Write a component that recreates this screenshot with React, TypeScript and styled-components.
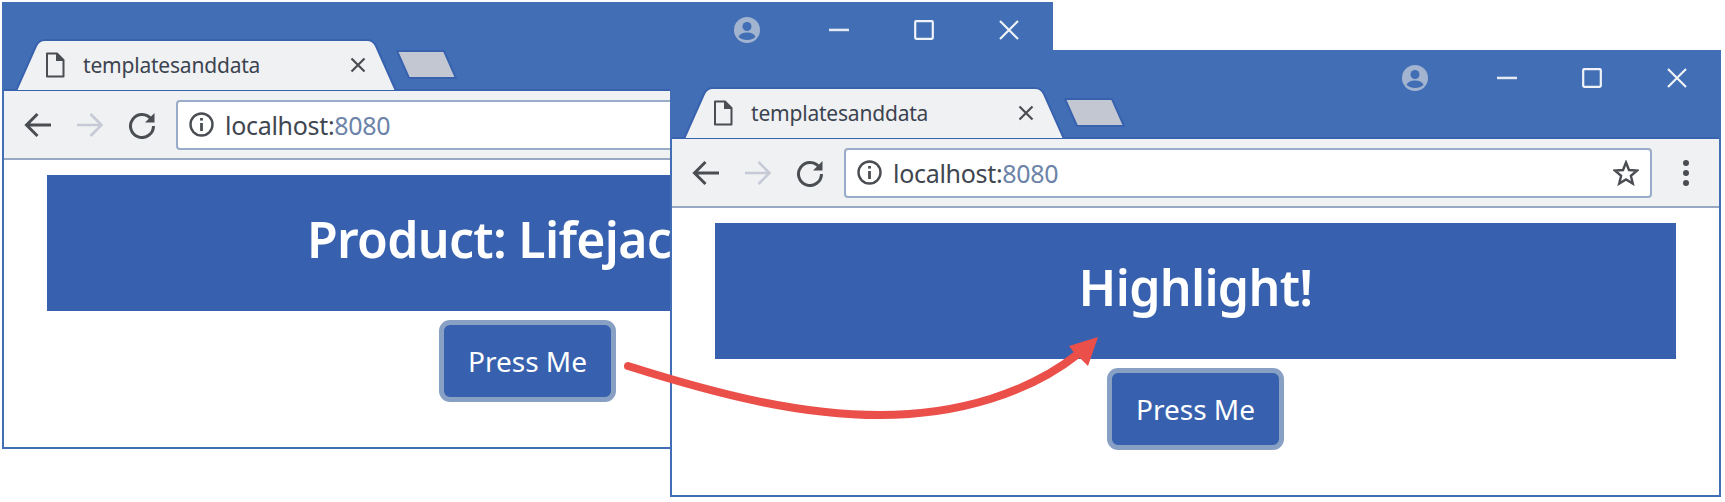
import React from 'react';
import styled, { createGlobalStyle } from 'styled-components';

const GlobalStyle = createGlobalStyle`
  html, body {
    margin: 0;
    padding: 0;
    background: #fff;
    font-family: "Noto Sans", "Open Sans", sans-serif;
  }
`;

const Stage = styled.div`
  position: relative;
  width: 1725px;
  height: 502px;
  overflow: hidden;
  background: #fff;
`;

const Window = styled.div<{ $x: number; $y: number }>`
  position: absolute;
  left: ${(p) => p.$x}px;
  top: ${(p) => p.$y}px;
  width: 1051px;
  height: 447px;
  box-sizing: border-box;
  border: 2px solid #416eb4;
  background: #fff;
  display: flex;
  flex-direction: column;
`;

const TitleBar = styled.div`
  height: 85px;
  flex: none;
  background: #416eb4;
  border-bottom: 2px solid #3862ae;
  box-sizing: content-box;
  display: flex;
  align-items: flex-end;
`;

const Tab = styled.div`
  position: relative;
  width: 382px;
  height: 52px;
  margin-left: 11px;
  margin-bottom: -2px;
  flex: none;
  display: flex;
  align-items: center;
  box-sizing: border-box;
  padding: 0 31px 0 30px;
  color: #3c4350;
  font-size: 21px;
`;

const TabShape = styled.svg`
  position: absolute;
  left: 0;
  top: 0;
`;

const TabIcon = styled.svg`
  position: relative;
  flex: none;
`;

const TabTitle = styled.span`
  position: relative;
  margin-left: 18px;
  flex: 1;
  white-space: nowrap;
  letter-spacing: -0.2px;
`;

const NewTab = styled.svg`
  flex: none;
  margin: 0 0 9px -3px;
`;

const Controls = styled.div`
  margin-left: auto;
  align-self: flex-start;
  display: flex;
  height: 52px;
`;

const ControlButton = styled.div<{ $gap?: number }>`
  width: 85px;
  margin-right: ${(p) => p.$gap ?? 0}px;
  display: flex;
  align-items: center;
  justify-content: center;
`;

const Toolbar = styled.div`
  height: 67px;
  flex: none;
  background: #f0f1f2;
  border-bottom: 2px solid #98a8c2;
  display: flex;
  align-items: center;
  padding-left: 8px;
  box-sizing: content-box;
`;

const NavButton = styled.div`
  width: 52px;
  flex: none;
  display: flex;
  align-items: center;
  justify-content: center;
`;

const Address = styled.div`
  width: 808px;
  height: 50px;
  margin-left: 8px;
  flex: none;
  box-sizing: border-box;
  border: 2px solid #98abc9;
  border-radius: 4px;
  background: #fff;
  display: flex;
  align-items: center;
  padding: 0 11px 0 11px;
  font-size: 25px;
  color: #3f4650;
`;

const Url = styled.span`
  margin-left: 11px;
  flex: 1;
  letter-spacing: -0.3px;

  em {
    font-style: normal;
    color: #6b83a8;
  }
`;

const MenuButton = styled.div`
  width: 68px;
  flex: none;
  display: flex;
  justify-content: center;
`;

const Content = styled.div`
  flex: 1;
  display: flex;
  flex-direction: column;
  align-items: center;
  padding: 15px 43px 0 43px;
  background: #fff;
`;

const Banner = styled.div`
  width: 100%;
  height: 136px;
  flex: none;
  box-sizing: border-box;
  padding-bottom: 8px;
  background: #3761ae;
  color: #fff;
  display: flex;
  align-items: center;
  justify-content: center;
  font-size: 50px;
  font-weight: 600;
  letter-spacing: -0.7px;
`;

const PressButton = styled.div`
  width: 177px;
  height: 82px;
  margin-top: 9px;
  flex: none;
  box-sizing: border-box;
  border: 5px solid #87a0c4;
  border-radius: 11px;
  background: #3761ae;
  color: #fff;
  display: flex;
  align-items: center;
  justify-content: center;
  font-size: 28px;
`;

const Arrow = styled.svg`
  position: absolute;
  left: 0;
  top: 0;
  pointer-events: none;
`;

const dark = '#4a4d52';

const BrowserWindow = ({ x, y, heading }: { x: number; y: number; heading: string }) => (
  <Window $x={x} $y={y}>
    <TitleBar>
      <Tab>
        <TabShape width="382" height="52" viewBox="0 0 382 52">
          <path
            d="M1 52 L21 7 Q24 1 30 1 L352 1 Q358 1 361 7 L381 52 Z"
            fill="#f0f1f2"
            stroke="#3862ae"
            strokeWidth="2"
          />
        </TabShape>
        <TabIcon width="20" height="26" viewBox="0 0 20 26" fill="none" stroke={dark} strokeWidth="2">
          <path d="M2 1.5 H12 L18.5 8 V24.5 H2 Z" strokeLinejoin="round" />
          <path d="M12 1.5 V8 H18.5" fill={dark} />
        </TabIcon>
        <TabTitle>templatesanddata</TabTitle>
        <TabIcon width="16" height="16" viewBox="0 0 16 16" stroke={dark} strokeWidth="2.2">
          <path d="M1.5 1.5 L14.5 14.5 M14.5 1.5 L1.5 14.5" />
        </TabIcon>
      </Tab>
      <NewTab width="64" height="36" viewBox="0 0 64 36">
        <path d="M3 7 H50 L62 34 H15 Z" fill="#c3c7d2" stroke="#3862ae" strokeWidth="2" strokeLinejoin="round" />
      </NewTab>
      <Controls>
        <ControlButton $gap={7}>
          <svg width="26" height="26" viewBox="0 0 26 26">
            <circle cx="13" cy="13" r="13" fill="#a3b4d0" />
            <circle cx="13" cy="9.5" r="4.5" fill="#416eb4" />
            <path d="M4.5 20 Q6 15.5 13 15.5 Q20 15.5 21.5 20 Q18 23 13 23 Q8 23 4.5 20 Z" fill="#416eb4" />
          </svg>
        </ControlButton>
        <ControlButton>
          <svg width="20" height="4" viewBox="0 0 20 4">
            <rect width="20" height="2.5" y="0.7" fill="#e6ebf3" />
          </svg>
        </ControlButton>
        <ControlButton>
          <svg width="20" height="20" viewBox="0 0 20 20" fill="none" stroke="#f0f3f8" strokeWidth="2.2">
            <rect x="1.2" y="1.2" width="17.6" height="17.6" rx="1" />
          </svg>
        </ControlButton>
        <ControlButton>
          <svg width="20" height="20" viewBox="0 0 20 20" stroke="#f0f3f8" strokeWidth="2.2">
            <path d="M1 1 L19 19 M19 1 L1 19" />
          </svg>
        </ControlButton>
      </Controls>
    </TitleBar>
    <Toolbar>
      <NavButton>
        <svg width="28" height="26" viewBox="0 0 28 26" fill="none" stroke={dark} strokeWidth="3">
          <path d="M27 13 H3 M13.5 2 L2.5 13 L13.5 24" />
        </svg>
      </NavButton>
      <NavButton>
        <svg width="28" height="26" viewBox="0 0 28 26" fill="none" stroke="#c6cad6" strokeWidth="2.6">
          <path d="M1 13 H25 M14.5 2 L25.5 13 L14.5 24" />
        </svg>
      </NavButton>
      <NavButton>
        <svg width="28" height="28" viewBox="0 0 28 28" fill="none">
          <path d="M23.5 8.5 A11.5 11.5 0 1 0 25.5 15" stroke={dark} strokeWidth="3" />
          <path d="M26.5 2 V11.5 H17 Z" fill={dark} />
        </svg>
      </NavButton>
      <Address>
        <svg width="25" height="25" viewBox="0 0 25 25" fill="none" stroke={dark} strokeWidth="2.4">
          <circle cx="12.5" cy="12.5" r="11" />
          <path d="M12.5 11 V19" strokeWidth="2.8" />
          <path d="M12.5 6 V8.6" strokeWidth="2.8" />
        </svg>
        <Url>
          localhost:<em>8080</em>
        </Url>
        <svg width="26" height="26" viewBox="0 0 26 26" fill="none" stroke={dark} strokeWidth="2.4" strokeLinejoin="miter">
          <path d="M13 2.5 L16 10 L24 10.6 L17.9 15.8 L19.8 23.6 L13 19.4 L6.2 23.6 L8.1 15.8 L2 10.6 L10 10 Z" />
        </svg>
      </Address>
      <MenuButton>
        <svg width="6" height="26" viewBox="0 0 6 26" fill={dark}>
          <circle cx="3" cy="3" r="3" />
          <circle cx="3" cy="13" r="3" />
          <circle cx="3" cy="23" r="3" />
        </svg>
      </MenuButton>
    </Toolbar>
    <Content>
      <Banner>{heading}</Banner>
      <PressButton>Press Me</PressButton>
    </Content>
  </Window>
);

const App = () => (
  <Stage>
    <GlobalStyle />
    <BrowserWindow x={2} y={2} heading="Product: Lifejacket" />
    <BrowserWindow x={670} y={50} heading="Highlight!" />
    <Arrow width="1725" height="502" viewBox="0 0 1725 502">
      <path
        d="M628 366 C 720 395, 800 415, 880 415 C 960 415, 1030 392, 1078 354"
        fill="none"
        stroke="#ea4f4a"
        strokeWidth="8"
        strokeLinecap="round"
      />
      <path d="M1098 337 L1069 346 L1075 354 L1082 360 L1088 366 Z" fill="#ea4f4a" />
    </Arrow>
  </Stage>
);

export default App;
